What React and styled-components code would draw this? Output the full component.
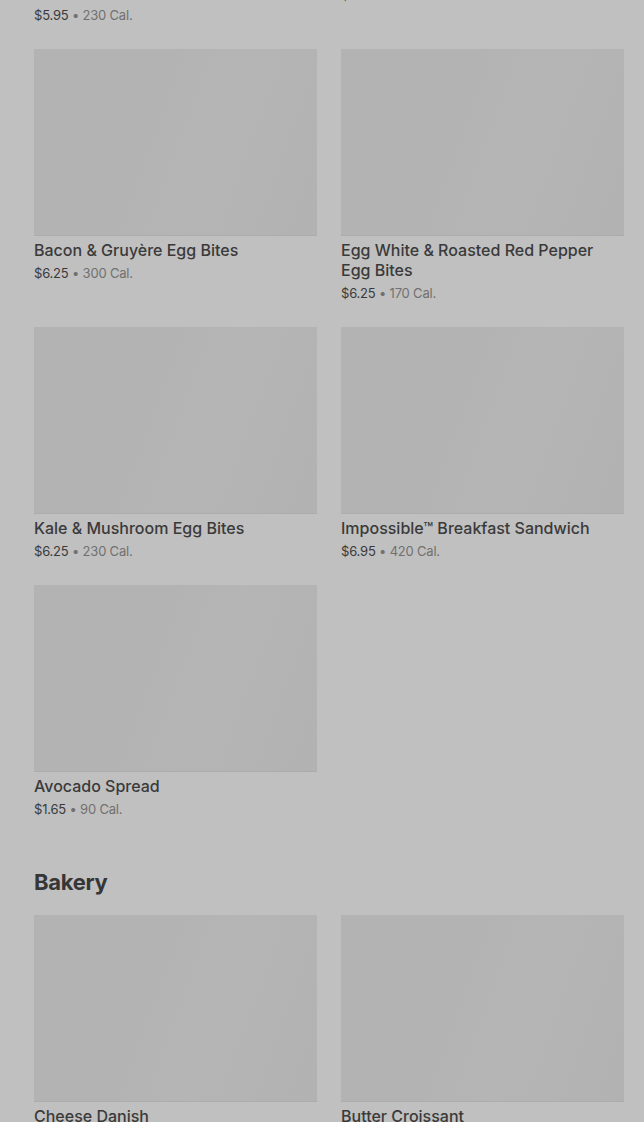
import styled, { createGlobalStyle } from "styled-components";

const GlobalStyle = createGlobalStyle`
  html, body {
    margin: 0;
    padding: 0;
    background: #c0c0c0;
    overflow: hidden;
  }
  body {
    font-family: Inter, "Liberation Sans", sans-serif;
    color: #333;
  }
`;

const Page = styled.main`
  margin-top: -229px;
  padding: 0 20px 40px 34px;
`;

const Section = styled.section`
  margin-bottom: 49px;
`;

const SectionTitle = styled.h2`
  margin: 0 0 19px;
  font-size: 22px;
  line-height: 28px;
  font-weight: 700;
  color: #363636;
  letter-spacing: -0.3px;
`;

const Grid = styled.div`
  display: grid;
  grid-template-columns: 1fr 1fr;
  column-gap: 24px;
  row-gap: 24px;
  align-items: start;
`;

const Card = styled.div`
  display: flex;
  flex-direction: column;
`;

const Thumb = styled.div`
  height: 187px;
  background: linear-gradient(
    110deg,
    #b3b3b3 0%,
    #b3b3b3 40%,
    #b5b5b5 60%,
    #b2b2b2 100%
  );
  border-bottom: 1px solid #acacac;
  box-sizing: border-box;
`;

const Name = styled.div`
  margin-top: 4px;
  font-size: 16px;
  line-height: 20px;
  font-weight: 500;
  color: #3a3a3a;
`;

const Meta = styled.div`
  margin-top: 3px;
  font-size: 13px;
  line-height: 20px;
  color: #707070;
  letter-spacing: -0.2px;
`;

const Price = styled.span`
  color: #3a3a3a;
`;

const breakfast = [
  { name: "Turkey Bacon, Cheddar & Egg White Sandwich", price: "$5.95", cal: 230 },
  { name: "Spinach, Feta & Egg White Wrap", price: "$5.45", cal: 290 },
  { name: "Bacon & Gruyère Egg Bites", price: "$6.25", cal: 300 },
  { name: "Egg White & Roasted Red Pepper Egg Bites", price: "$6.25", cal: 170 },
  { name: "Kale & Mushroom Egg Bites", price: "$6.25", cal: 230 },
  { name: "Impossible™ Breakfast Sandwich", price: "$6.95", cal: 420 },
  { name: "Avocado Spread", price: "$1.65", cal: 90 },
];

const bakery = [
  { name: "Cheese Danish", price: "$3.45", cal: 290 },
  { name: "Butter Croissant", price: "$3.25", cal: 260 },
];

function Item({ item }) {
  return (
    <Card>
      <Thumb />
      <Name>{item.name}</Name>
      <Meta>
        <Price>{item.price}</Price> • {item.cal} Cal.
      </Meta>
    </Card>
  );
}

export default function App() {
  return (
    <>
      <GlobalStyle />
      <Page>
        <Section>
          <Grid>
            {breakfast.map((item) => (
              <Item key={item.name} item={item} />
            ))}
          </Grid>
        </Section>
        <Section>
          <SectionTitle>Bakery</SectionTitle>
          <Grid>
            {bakery.map((item) => (
              <Item key={item.name} item={item} />
            ))}
          </Grid>
        </Section>
      </Page>
    </>
  );
}
